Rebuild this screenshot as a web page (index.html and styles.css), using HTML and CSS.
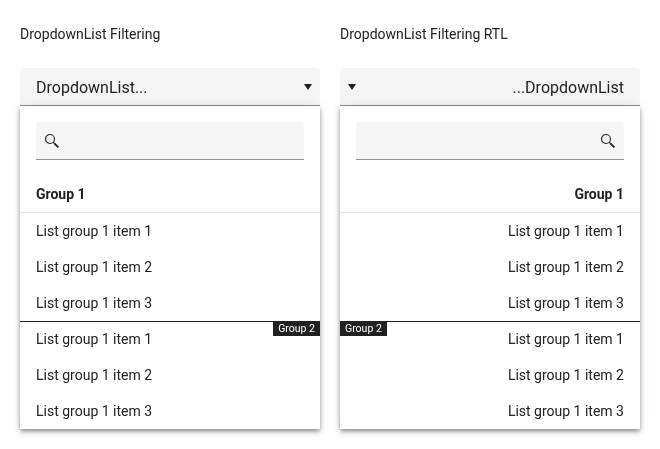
FILE: index.html
```html
<!DOCTYPE html>
<html lang="en">
<head>
<meta charset="utf-8">
<title>DropdownList Filtering</title>
<link rel="stylesheet" href="styles.css">
</head>
<body>
<main class="page">
  <section class="demo">
    <h2 class="title">DropdownList Filtering</h2>
    <div class="dropdown"><span class="value">DropdownList...</span><svg class="caret" viewBox="0 0 8 6"><path d="M0 0h8L4 6z"/></svg></div>
    <div class="popup">
      <div class="filter"><svg class="search" viewBox="0 0 16 16"><circle cx="6" cy="6" r="4.5"/><path class="neck" d="M9.2 9.2L11 11"/><path class="handle" d="M10.6 10.6L14.4 14.4"/></svg></div>
      <div class="group">Group 1</div>
      <ul class="list">
        <li>List group 1 item 1</li><li>List group 1 item 2</li><li>List group 1 item 3</li>
        <li class="first">List group 1 item 1<span class="tag">Group 2</span></li><li>List group 1 item 2</li><li>List group 1 item 3</li>
      </ul>
    </div>
  </section>
  <section class="demo">
    <h2 class="title">DropdownList Filtering RTL</h2>
    <div dir="rtl">
    <div class="dropdown"><span class="value">DropdownList...</span><svg class="caret" viewBox="0 0 8 6"><path d="M0 0h8L4 6z"/></svg></div>
    <div class="popup">
      <div class="filter"><svg class="search" viewBox="0 0 16 16"><circle cx="6" cy="6" r="4.5"/><path class="neck" d="M9.2 9.2L11 11"/><path class="handle" d="M10.6 10.6L14.4 14.4"/></svg></div>
      <div class="group">Group 1</div>
      <ul class="list">
        <li><bdi>List group 1 item 1</bdi></li><li><bdi>List group 1 item 2</bdi></li><li><bdi>List group 1 item 3</bdi></li>
        <li class="first"><bdi>List group 1 item 1</bdi><span class="tag"><bdi>Group 2</bdi></span></li><li><bdi>List group 1 item 2</bdi></li><li><bdi>List group 1 item 3</bdi></li>
      </ul>
    </div>
    </div>
  </section>
</main>
</body>
</html>
```
FILE: styles.css
```css
* { box-sizing: border-box; }
body { margin: 0; background: #fff; color: #212121; font: 14px/20px Roboto, sans-serif; }
.page { display: flex; gap: 20px; min-height: 449px; padding: 24px 20px 0; will-change: transform; }
.demo { width: 300px; }
.title { margin: 0 0 24px; font-size: 14px; font-weight: 400; line-height: 20px; }
.dropdown { display: flex; align-items: center; justify-content: space-between; height: 38px; padding: 0 16px; padding-inline-end: 8px; font-size: 16px; background: #f5f5f5; border-bottom: 1px solid #949494; border-radius: 4px 4px 0 0; }
.value { padding-top: 2px; }
.caret { width: 8px; height: 6px; fill: #212121; }
.popup { height: 323px; background: #fff; box-shadow: 0 2px 4px -1px rgba(0,0,0,.28), 0 3px 5px rgba(0,0,0,.24), 0 1px 10px rgba(0,0,0,.12); padding-top: 16px; }
.filter { display: flex; align-items: center; height: 38px; margin: 0 16px 16px; padding: 0 8px; background: #f5f5f5; border-bottom: 1px solid #949494; border-radius: 4px 4px 0 0; }
.search { width: 16px; height: 16px; fill: none; stroke: #212121; stroke-width: 1.1; }
.search .handle { stroke-width: 2; }
.group { height: 37px; padding: 8px 16px; font-weight: 700; border-bottom: 1px solid #e0e0e0; }
.list { margin: 0; padding: 0; list-style: none; }
.list li { height: 36px; padding: 8px 16px; }
.list .first { position: relative; border-top: 1px solid #212121; padding-top: 7px; }
.tag { position: absolute; top: 0; inset-inline-end: 0; height: 14px; padding: 0 5px; background: #212121; color: #fff; font-size: 10.5px; line-height: 14px; }
```
